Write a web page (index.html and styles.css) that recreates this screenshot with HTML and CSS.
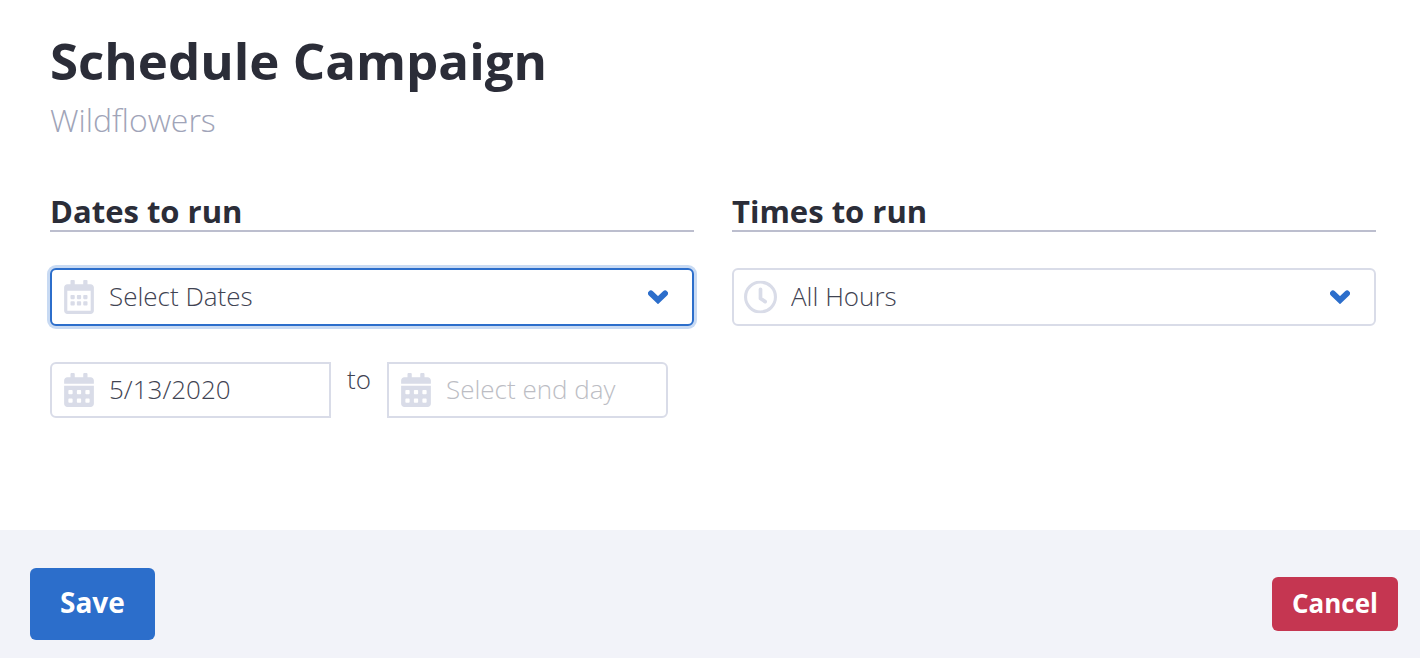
FILE: index.html
```html
<!DOCTYPE html>
<html lang="en">
<head>
<meta charset="utf-8">
<meta name="viewport" content="width=device-width, initial-scale=1">
<title>Schedule Campaign</title>
<link rel="stylesheet" href="styles.css">
</head>
<body>
<svg class="sprite" aria-hidden="true">
  <symbol id="calendar-solid" viewBox="0 0 448 512">
    <path d="M0 464c0 26.500 21.500 48 48 48h352c26.500 0 48-21.500 48-48V192H0v272zm320-196c0-6.600 5.400-12 12-12h40c6.600 0 12 5.400 12 12v40c0 6.600-5.400 12-12 12h-40c-6.600 0-12-5.400-12-12v-40zm0 128c0-6.600 5.400-12 12-12h40c6.600 0 12 5.400 12 12v40c0 6.600-5.400 12-12 12h-40c-6.600 0-12-5.400-12-12v-40zM192 268c0-6.600 5.400-12 12-12h40c6.600 0 12 5.400 12 12v40c0 6.600-5.400 12-12 12h-40c-6.600 0-12-5.400-12-12v-40zm0 128c0-6.600 5.400-12 12-12h40c6.600 0 12 5.400 12 12v40c0 6.600-5.400 12-12 12h-40c-6.600 0-12-5.400-12-12v-40zM64 268c0-6.600 5.400-12 12-12h40c6.600 0 12 5.400 12 12v40c0 6.600-5.400 12-12 12H76c-6.600 0-12-5.400-12-12v-40zm0 128c0-6.600 5.400-12 12-12h40c6.600 0 12 5.400 12 12v40c0 6.600-5.400 12-12 12H76c-6.600 0-12-5.400-12-12v-40zM400 64h-48V16c0-8.800-7.200-16-16-16h-32c-8.800 0-16 7.200-16 16v48H160V16c0-8.800-7.200-16-16-16h-32c-8.800 0-16 7.200-16 16v48H48C21.500 64 0 85.500 0 112v48h448v-48c0-26.500-21.500-48-48-48z"/>
  </symbol>
  <symbol id="calendar-outline" viewBox="0 0 448 512">
    <path d="M148 288h-40c-6.600 0-12-5.400-12-12v-40c0-6.600 5.400-12 12-12h40c6.600 0 12 5.400 12 12v40c0 6.600-5.400 12-12 12zm108-12v-40c0-6.600-5.400-12-12-12h-40c-6.600 0-12 5.400-12 12v40c0 6.600 5.400 12 12 12h40c6.600 0 12-5.400 12-12zm96 0v-40c0-6.600-5.400-12-12-12h-40c-6.600 0-12 5.400-12 12v40c0 6.600 5.400 12 12 12h40c6.600 0 12-5.400 12-12zm-96 96v-40c0-6.600-5.400-12-12-12h-40c-6.600 0-12 5.400-12 12v40c0 6.600 5.400 12 12 12h40c6.600 0 12-5.400 12-12zm-96 0v-40c0-6.600-5.400-12-12-12h-40c-6.600 0-12 5.400-12 12v40c0 6.600 5.400 12 12 12h40c6.600 0 12-5.400 12-12zm192 0v-40c0-6.600-5.400-12-12-12h-40c-6.600 0-12 5.400-12 12v40c0 6.600 5.400 12 12 12h40c6.600 0 12-5.400 12-12zm96-260v352c0 26.500-21.500 48-48 48H48c-26.500 0-48-21.500-48-48V112c0-26.500 21.500-48 48-48h48V12c0-6.600 5.400-12 12-12h40c6.600 0 12 5.400 12 12v52h128V12c0-6.600 5.400-12 12-12h40c6.600 0 12 5.400 12 12v52h48c26.500 0 48 21.500 48 48zm-48 346V160H48v298c0 3.300 2.700 6 6 6h340c3.300 0 6-2.700 6-6z"/>
  </symbol>
  <symbol id="clock" viewBox="0 0 32 32">
    <g fill="none" stroke="currentColor" stroke-linecap="round" stroke-linejoin="round">
      <circle cx="16" cy="16" r="14.500" stroke-width="3"/>
      <path d="M16 8.500V17.500L20.500 20.500" stroke-width="3.600"/>
    </g>
  </symbol>
  <symbol id="chevron" viewBox="0 0 20 14">
    <path d="M2.900 3.400L10 10.200L17.100 3.400" fill="none" stroke="currentColor" stroke-width="5.800" stroke-linecap="round"/>
  </symbol>
</svg>
<form class="schedule">
  <main class="content">
    <header>
      <h1 class="title">Schedule Campaign</h1>
      <p class="subtitle">Wildflowers</p>
    </header>
    <div class="columns">
      <section>
        <h2 class="section-title"><label for="dates">Dates to run</label></h2>
        <div class="field">
          <svg class="icon"><use href="#calendar-outline"/></svg>
          <select class="control select active" id="dates"><option>Select Dates</option></select>
          <svg class="chevron"><use href="#chevron"/></svg>
        </div>
        <div class="range">
          <div class="field">
            <svg class="icon"><use href="#calendar-solid"/></svg>
            <input class="control date start" type="text" aria-label="Start day" value="5/13/2020">
          </div>
          <span class="to">to</span>
          <div class="field">
            <svg class="icon"><use href="#calendar-solid"/></svg>
            <input class="control date end" type="text" aria-label="End day" placeholder="Select end day">
          </div>
        </div>
      </section>
      <section>
        <h2 class="section-title"><label for="times">Times to run</label></h2>
        <div class="field">
          <svg class="icon clock"><use href="#clock"/></svg>
          <select class="control select" id="times"><option>All Hours</option></select>
          <svg class="chevron"><use href="#chevron"/></svg>
        </div>
      </section>
    </div>
  </main>
  <footer class="footer">
    <button class="button save" type="submit">Save</button>
    <button class="button cancel" type="button">Cancel</button>
  </footer>
</form>
</body>
</html>
```
FILE: styles.css
```css
* { box-sizing: border-box; }

body {
  margin: 0;
  background: #fff;
  color: #2b2d38;
  font-family: "Open Sans", "Noto Sans", sans-serif;
}

.sprite { display: none; }

.schedule {
  display: flex;
  flex-direction: column;
  min-height: 100vh;
}

.content {
  flex: 1;
  padding: 30px 44px 40px 50px;
}

.title {
  margin: 0;
  font-size: 51px;
  line-height: 60px;
  font-weight: 700;
}

.subtitle {
  margin: 10px 0 0;
  color: #a0a4b8;
  font-size: 32px;
  line-height: 40px;
  font-weight: 300;
}

.columns {
  display: grid;
  grid-template-columns: 1fr 1fr;
  gap: 38px;
  margin-top: 52px;
}

.section-title {
  margin: 0 0 36px;
  border-bottom: 2px solid #bcbece;
  font-size: 31px;
  line-height: 38px;
  font-weight: 700;
}

.field {
  position: relative;
  flex: 1;
}

.icon {
  position: absolute;
  top: 50%;
  left: 14px;
  width: 30px;
  height: 34px;
  transform: translateY(-50%);
  color: #d9dce8;
  fill: currentColor;
  pointer-events: none;
}

.icon.clock {
  left: 12px;
  width: 33px;
  height: 33px;
}

.chevron {
  position: absolute;
  top: 50%;
  right: 26px;
  width: 20px;
  height: 14px;
  transform: translateY(-50%);
  color: #2c6ecb;
  pointer-events: none;
}

.control {
  display: block;
  width: 100%;
  border: 2px solid #d9dce8;
  border-radius: 6px;
  padding: 0 12px 2px 57px;
  background: #fff;
  color: #3f4352;
  font-family: inherit;
  font-size: 26px;
  font-weight: 300;
  outline: none;
}

.control::placeholder {
  color: #bcbdc4;
  opacity: 1;
}

.select {
  appearance: none;
  height: 58px;
  padding-right: 60px;
}

.select.active {
  border-color: #2c6ecb;
  box-shadow: 0 0 0 3px #c8daf3;
}

.date { height: 56px; }

.start { border-radius: 6px 0 0 6px; }

.end { border-radius: 0 6px 6px 0; }

.range {
  display: flex;
  margin: 36px 26px 0 0;
}

.to {
  width: 56px;
  color: #3f4352;
  font-size: 26px;
  line-height: 34px;
  font-weight: 300;
  text-align: center;
}

.footer {
  display: flex;
  align-items: center;
  justify-content: space-between;
  padding: 38px 22px 18px 30px;
  background: #f2f3f9;
}

.button {
  border: 0;
  border-radius: 6px;
  color: #fff;
  font-family: inherit;
  font-weight: 700;
}

.save {
  padding: 16px 30px 20px;
  background: #2c6ecb;
  font-size: 28px;
  line-height: 36px;
}

.cancel {
  padding: 8px 20px 10px;
  background: #c53651;
  font-size: 26px;
  line-height: 36px;
}
```
